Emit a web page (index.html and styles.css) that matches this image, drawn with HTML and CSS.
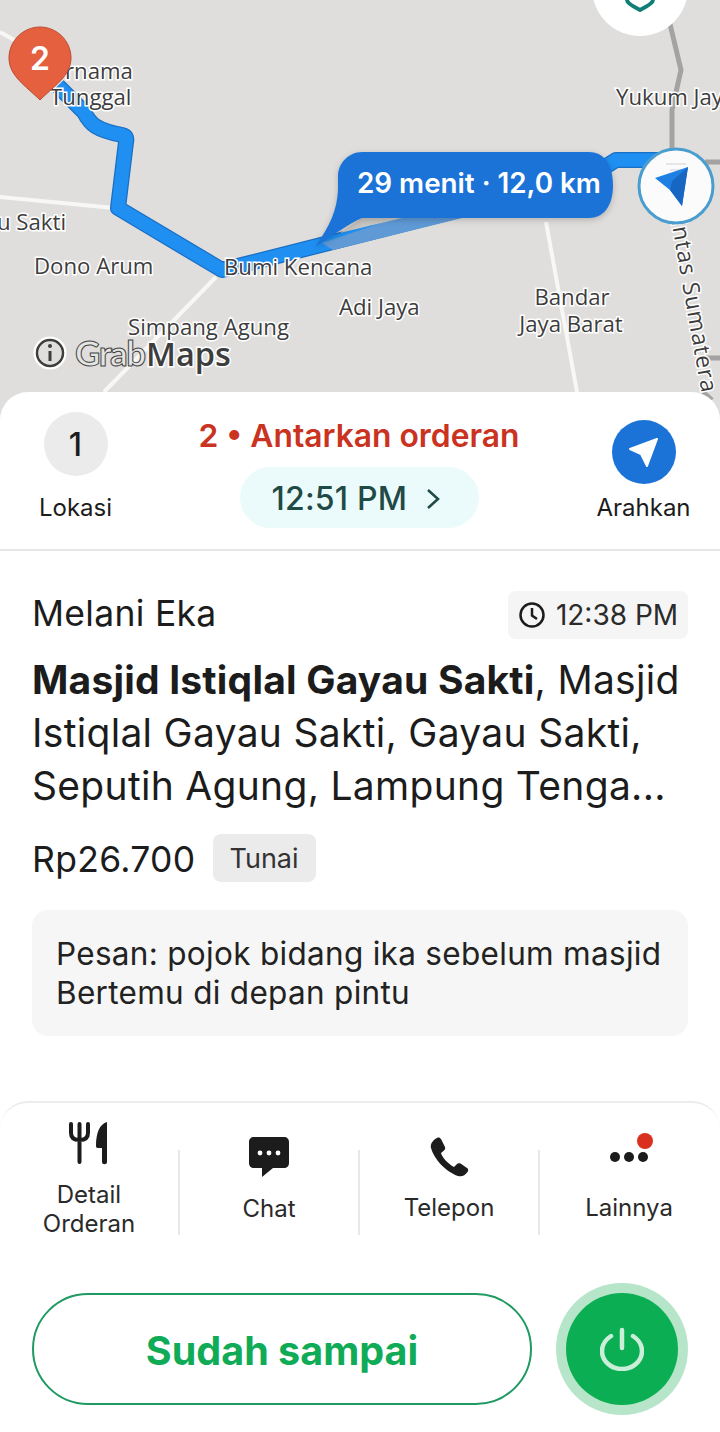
FILE: index.html
```html
<!DOCTYPE html>
<html lang="id">
<head>
	<meta charset="UTF-8">
	<meta name="viewport" content="width=device-width, initial-scale=1.0">
	<title>Antarkan orderan</title>
	<link rel="stylesheet" href="styles.css">
</head>
<body>
<div class="screen">
	<div class="map">
		<svg class="map-canvas" width="720" height="420" viewBox="0 0 720 420">
			<g class="road-white">
				<path d="M0 32L16 41"/>
				<path d="M0 197L114 208"/>
				<path d="M216 277L104 392"/>
				<path d="M546 222L577 392"/>
			</g>
			<g class="road-grey">
				<path d="M670 24L681 70L672 110V160"/>
				<path d="M705 162H720"/>
				<path d="M706 358H720"/>
				<path d="M703 392L712 400"/>
			</g>
			<g class="route-edge">
				<path d="M58 86L84 112C90 124 96 130 122 135C126 136 127 138 126 142L118 208L222 270L463 209L600 170L616 160H660"/>
			</g>
			<g class="route-fill">
				<path d="M58 86L84 112C90 124 96 130 122 135C126 136 127 138 126 142L118 208L222 270L463 209L600 170L616 160H660"/>
			</g>

			<g class="map-label">
				<text x="65" y="79">rnama</text>
				<text x="50" y="105">Tunggal</text>
				<text x="66" y="230" text-anchor="end">Gayau Sakti</text>
				<text x="34" y="274">Dono Arum</text>
				<text x="224" y="275">Bumi Kencana</text>
				<text x="339" y="315">Adi Jaya</text>
				<text x="128" y="335">Simpang Agung</text>
				<text x="572" y="305" text-anchor="middle">Bandar</text>
				<text x="571" y="332" text-anchor="middle">Jaya Barat</text>
				<text x="616" y="105">Yukum Jaya</text>
				<text class="road-name" transform="translate(669 208) rotate(80)">Lintas Sumatera</text>
			</g>

			<!-- logo peta -->
			<circle class="info-halo" cx="50" cy="353" r="14"/>
			<circle class="info-ring" cx="50" cy="353" r="13"/>
			<circle class="info-dot" cx="50" cy="346" r="2"/>
			<path class="info-bar" d="M50 351V361"/>
			<text class="logo-grab" x="75" y="366">Grab</text>
			<text class="logo-maps" x="146" y="366">Maps</text>

			<!-- tombol keamanan -->
			<circle class="shield-btn" cx="640" cy="-12" r="48"/>
			<path class="shield-icon" d="M627 -3V0C627 3 634 7 640 10C646 7 653 3 653 0V-3"/>

			<!-- bubble waktu -->
			<path class="bubble-shade" d="M322 243L396 218H462L333 250Z"/>
			<path class="bubble-gap" d="M340 233L362 218H402Z"/>
			<path class="bubble" d="M362 152H589C603 152 613 163 613 185C613 207 603 218 589 218H362C348 224 332 236 315 247C330 226 337 210 338 190V176C338 163 349 152 362 152Z"/>
			<text class="bubble-text" x="357" y="193">29 menit · 12,0 km</text>

			<!-- posisi driver -->
			<circle class="car-ring" cx="676" cy="186" r="37"/>
			<path class="car-ghost" d="M666 164H686M670 170H682"/>
			<path class="car-arrow" d="M688 167L655 178L670 190L682 206Z"/>
			<path class="car-arrow-dark" d="M688 167L672 181L670 190L682 206Z"/>

			<!-- pin tujuan -->
			<path class="pin" d="M40 27C57 27 71 41 71 58C71 76 54 86 40 100C26 86 9 76 9 58C9 41 23 27 40 27Z"/>
			<text class="pin-num" x="40" y="70">2</text>
		</svg>
	</div>

	<div class="sheet">
		<div class="top-bar">
			<div class="top-side">
				<div class="round-num">1</div>
				<span class="side-label">Lokasi</span>
			</div>
			<div class="top-main">
				<div class="job-title">2 • Antarkan orderan</div>
				<div class="eta-pill">
					<span>12:51 PM</span>
					<svg width="16" height="24" viewBox="0 0 16 24"><path class="eta-arrow" d="M3 3L13 12L3 21"/></svg>
				</div>
			</div>
			<div class="top-side top-side-nav">
				<div class="round-nav">
					<svg width="34" height="34" viewBox="0 0 34 34"><path class="nav-arrow" d="M30 4L3 14L14 19L20 31Z"/></svg>
				</div>
				<span class="side-label">Arahkan</span>
			</div>
		</div>

		<div class="details">
			<div class="customer-row">
				<span class="customer">Melani Eka</span>
				<span class="time-chip">
					<svg width="28" height="28" viewBox="0 0 28 28"><circle class="clock" cx="14" cy="14" r="11.500"/><path class="clock" d="M14 7V14.500L19 18"/></svg>
					12:38 PM
				</span>
			</div>
			<p class="address"><b>Masjid Istiqlal Gayau Sakti</b>, Masjid Istiqlal Gayau Sakti, Gayau Sakti, Seputih Agung, Lampung Tenga...</p>
			<div class="price-row">
				<span class="price">Rp26.700</span>
				<span class="pay-chip">Tunai</span>
			</div>
			<div class="note">Pesan: pojok bidang ika sebelum masjid<br>Bertemu di depan pintu</div>
		</div>

		<div class="bottom">
			<div class="actions">
				<div class="action">
					<svg width="40" height="42" viewBox="0 0 40 42">
						<path class="fork" d="M2 2V11C2 16 5 18 10.500 18C16 18 19 16 19 11V2M10.500 2V40"/>
						<path d="M38 0C31 2 27 10 27 24C27 26 28 26 33 26V40C33 43 38 43 38 40Z"/>
					</svg>
					<span>Detail<br>Orderan</span>
				</div>
				<div class="action-line"></div>
				<div class="action">
					<svg width="40" height="41" viewBox="0 0 40 41">
						<path d="M5 0H35C38 0 40 2 40 5V26C40 29 38 31 35 31H24L13 40V31H5C2 31 0 29 0 26V5C0 2 2 0 5 0Z"/>
						<circle cx="11" cy="16" r="2.400" fill="#fff"/><circle cx="20" cy="16" r="2.400" fill="#fff"/><circle cx="29" cy="16" r="2.400" fill="#fff"/>
					</svg>
					<span>Chat</span>
				</div>
				<div class="action-line"></div>
				<div class="action">
					<svg width="40" height="40" viewBox="0 0 40 40">
						<path d="M8 1C10 0 11 1 12 2L16 10C16.500 11.500 16 12.500 15 13.500L12 16C13 20 19 27 25 30L28 27C29 26 30 26 31.500 26.500L38 31C39.500 32 39.500 33.500 38.500 35C36 38.500 33 40 29 39C17 35 5 22 2 11C1 7 4 3 8 1Z"/>
					</svg>
					<span>Telepon</span>
				</div>
				<div class="action-line"></div>
				<div class="action">
					<svg width="40" height="40" viewBox="0 0 40 40">
						<circle cx="6" cy="20" r="5"/><circle cx="20" cy="20" r="5"/><circle cx="34" cy="20" r="5"/>
						<circle cx="36" cy="4" r="8" fill="#d9301f"/>
					</svg>
					<span>Lainnya</span>
				</div>
			</div>

			<div class="cta-row">
				<div class="cta">Sudah sampai</div>
				<div class="power">
					<svg width="44" height="44" viewBox="0 0 44 44"><path d="M22 3V21M11 9C5 13 2 18 2 24C2 34 11 42 22 42C33 42 42 34 42 24C42 18 39 13 33 9"/></svg>
				</div>
			</div>
		</div>
	</div>
</div>
</body>
</html>
```
FILE: styles.css
```css
* {
	box-sizing: border-box;
}

body {
	margin: 0;
	background: #fff;
	font-family: Inter, "Liberation Sans", sans-serif;
	color: #1c1c1c;
}

.screen {
	width: 720px;
	height: 1432px;
	display: flex;
	flex-direction: column;
	overflow: hidden;
}

/* Peta */
.map {
	height: 420px;
	margin-bottom: -28px;
	background: #dfdedc;
	flex-shrink: 0;
}

.map-canvas {
	display: block;
	overflow: hidden;
}

.road-white path {
	fill: none;
	stroke: #f7f7f5;
	stroke-width: 4;
}

.road-grey path {
	fill: none;
	stroke: #a3a3a3;
	stroke-width: 5;
}

.route-edge path {
	fill: none;
	stroke: #1a6fc4;
	stroke-width: 16;
	stroke-linejoin: round;
}

.route-fill path {
	fill: none;
	stroke: #1f90f2;
	stroke-width: 13.500;
	stroke-linejoin: round;
}

.map-label text {
	font-family: "Open Sans", "Noto Sans", sans-serif;
	font-size: 22.200px;
	fill: #3d3d3d;
	stroke: #fff;
	stroke-width: 3px;
	paint-order: stroke;
}

.map-label .road-name {
	font-size: 23px;
	letter-spacing: 1px;
}

.info-halo {
	fill: none;
	stroke: #fff;
	stroke-width: 5;
}

.info-ring {
	fill: none;
	stroke: #3d3d3d;
	stroke-width: 2.500;
}

.info-dot {
	fill: #3d3d3d;
}

.info-bar {
	stroke: #3d3d3d;
	stroke-width: 3;
}

.logo-grab {
	font-family: Lato, sans-serif;
	font-size: 35px;
	font-weight: 700;
	fill: #e4e4e2;
	stroke: #444;
	stroke-width: 1px;
	letter-spacing: -1.500px;
}

.logo-maps {
	font-family: "Open Sans", sans-serif;
	font-size: 32.500px;
	font-weight: 600;
	fill: #3d3d3d;
	stroke: #fff;
	stroke-width: 3px;
	paint-order: stroke;
}

.shield-btn {
	fill: #fff;
}

.shield-icon {
	fill: none;
	stroke: #0f7f74;
	stroke-width: 4;
}

.bubble {
	fill: #1b73d8;
	filter: drop-shadow(0 2px 3px rgba(0, 0, 0, 0.2));
}

.bubble-shade {
	fill: #5f9ad6;
}

.bubble-gap {
	fill: #c9c7c3;
}

.bubble-text {
	font-family: Inter, sans-serif;
	font-size: 27.800px;
	font-weight: 600;
	fill: #fff;
}

.car-ring {
	fill: #fbfbfb;
	stroke: #4a9ecf;
	stroke-width: 3;
}

.car-ghost {
	fill: none;
	stroke: #e6e6e6;
	stroke-width: 2;
}

.car-arrow {
	fill: #1f80e4;
}

.car-arrow-dark {
	fill: #1766c2;
}

.pin {
	fill: #e5603f;
	stroke: #b94c33;
	stroke-width: 1;
}

.pin-num {
	font-family: Inter, sans-serif;
	font-size: 32px;
	font-weight: 600;
	fill: #fff;
	text-anchor: middle;
}

/* Panel bawah */
.sheet {
	flex: 1;
	display: flex;
	flex-direction: column;
	position: relative;
	background: #fff;
	border-radius: 28px 28px 0 0;
}

.top-bar {
	height: 159px;
	display: flex;
	border-bottom: 2px solid #e6e6e6;
	flex-shrink: 0;
}

.top-side {
	width: 151px;
	padding-top: 20px;
	display: flex;
	flex-direction: column;
	align-items: center;
}

.top-side-nav {
	width: 153px;
	padding-top: 28px;
}

.round-num {
	width: 64px;
	height: 64px;
	border-radius: 50%;
	background: #ebebeb;
	display: flex;
	align-items: center;
	justify-content: center;
	font-size: 32px;
	font-weight: 500;
}

.round-nav {
	width: 64px;
	height: 64px;
	border-radius: 50%;
	background: #1b73d8;
	display: flex;
	align-items: center;
	justify-content: center;
}

.nav-arrow {
	fill: #fff;
	stroke: #fff;
	stroke-width: 2;
	stroke-linejoin: round;
}

.side-label {
	font-size: 24px;
	line-height: 30px;
	margin-top: 17px;
}

.top-side-nav .side-label {
	margin-top: 9px;
}

.top-main {
	flex: 1;
	display: flex;
	flex-direction: column;
	align-items: center;
	padding-top: 25px;
}

.job-title {
	font-size: 31.800px;
	line-height: 38px;
	font-weight: 600;
	color: #c9331f;
}

.eta-pill {
	width: 239px;
	height: 61px;
	margin-top: 12px;
	padding: 2px 0 0 32px;
	border-radius: 31px;
	background: #ebfafa;
	display: flex;
	align-items: center;
	gap: 18px;
	font-size: 32px;
	font-weight: 500;
	letter-spacing: 0.200px;
	color: #1f4a45;
}

.eta-arrow {
	fill: none;
	stroke: #1f4a45;
	stroke-width: 2.500;
}

.details {
	flex: 1;
	padding: 40px 32px 0;
}

.customer-row {
	display: flex;
	justify-content: space-between;
	align-items: center;
}

.customer {
	font-size: 35.500px;
	letter-spacing: 0.300px;
	margin-top: -4px;
}

.time-chip {
	width: 180px;
	height: 48px;
	display: flex;
	align-items: center;
	justify-content: center;
	gap: 10px;
	border-radius: 8px;
	background: #f5f5f5;
	font-size: 28px;
	color: #2b2b2b;
}

.clock {
	fill: none;
	stroke: #1c1c1c;
	stroke-width: 2.500;
}

.address {
	margin: 14px 0 0;
	font-size: 39px;
	line-height: 53px;
	letter-spacing: 0.300px;
	color: #1c1c1c;
}

.address b {
	font-weight: 700;
	letter-spacing: 0.200px;
}

.price-row {
	display: flex;
	align-items: center;
	gap: 17px;
	margin-top: 22px;
}

.price {
	font-size: 35.500px;
	letter-spacing: 0.300px;
	padding-top: 3px;
}

.pay-chip {
	width: 103px;
	height: 48px;
	display: flex;
	align-items: center;
	justify-content: center;
	border-radius: 8px;
	background: #ebebeb;
	font-size: 27px;
	color: #333;
}

.note {
	margin-top: 28px;
	height: 126px;
	padding: 24px 24px 0;
	border-radius: 16px;
	background: #f6f6f6;
	font-size: 31.500px;
	line-height: 39px;
	letter-spacing: 0.300px;
	color: #222;
}

.bottom {
	height: 331px;
	flex-shrink: 0;
	padding-top: 19px;
	border-top: 2px solid #ececec;
	border-radius: 28px 28px 0 0;
}

.actions {
	display: flex;
	height: 115px;
}

.action {
	width: 178px;
	display: flex;
	flex-direction: column;
	align-items: center;
	justify-content: center;
	gap: 16px;
	font-size: 24px;
	line-height: 29px;
	text-align: center;
	color: #2a2a2a;
}

.action svg {
	fill: #1c1c1c;
	display: block;
	overflow: visible;
}

.action .fork {
	fill: none;
	stroke: #1c1c1c;
	stroke-width: 4;
	stroke-linecap: round;
}

.action-line {
	width: 2px;
	height: 85px;
	margin-top: 28px;
	background: #e8e8e8;
}

.cta-row {
	display: flex;
	align-items: center;
	gap: 34px;
	margin-top: 56px;
	padding: 0 42px 0 32px;
}

.cta {
	width: 500px;
	height: 112px;
	padding-top: 3px;
	border: 2.500px solid #1f9a62;
	border-radius: 56px;
	display: flex;
	align-items: center;
	justify-content: center;
	font-size: 39.500px;
	font-weight: 700;
	color: #10ab57;
}

.power {
	width: 112px;
	height: 112px;
	flex-shrink: 0;
	border-radius: 50%;
	background: #0bae52;
	box-shadow: 0 0 0 10px #b7e5ca;
	display: flex;
	align-items: center;
	justify-content: center;
}

.power path {
	fill: none;
	stroke: #c9efd9;
	stroke-width: 4.500;
	stroke-linecap: round;
}
```
